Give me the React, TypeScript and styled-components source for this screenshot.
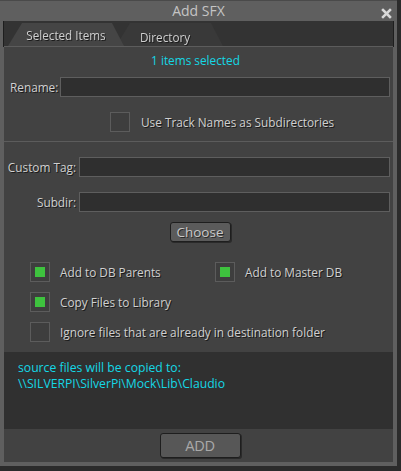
import React from "react";
import styled, { createGlobalStyle } from "styled-components";

const Global = createGlobalStyle`
  html, body { margin: 0; padding: 0; background: #2b2b2b; }
  body { font-family: "Open Sans", "Noto Sans", sans-serif; }
`;

const Window = styled.div`
  width: 397px;
  height: 466px;
  box-sizing: border-box;
  background: #5f5f5f;
  border-top: 1px solid #4a4a4a;
  padding: 0 4px 4px 4px;
  display: flex;
  flex-direction: column;
`;

const TitleBar = styled.div`
  height: 20px;
  position: relative;
  display: flex;
  align-items: center;
  justify-content: center;
  color: #c4c4c4;
  font-size: 14px;
  line-height: 20px;
`;

const Close = styled.svg`
  position: absolute;
  right: 1px;
  top: 7px;
`;

const Body = styled.div`
  flex: 1;
  display: flex;
  flex-direction: column;
  background: #424242;
`;

const TabBar = styled.div`
  height: 25px;
  background: #333333;
  border-bottom: 1px solid #5c5c5c;
  display: flex;
  align-items: flex-end;
  padding-left: 4px;
  filter: drop-shadow(1px 0 0 #1e1e1e) drop-shadow(-1px 0 0 #1e1e1e);
`;

const Tab = styled.div<{ $active?: boolean; $w: number }>`
  width: ${(p) => p.$w}px;
  height: 23px;
  margin-left: ${(p) => (p.$active ? 0 : -8)}px;
  position: relative;
  z-index: ${(p) => (p.$active ? 2 : 1)};
  background: ${(p) => (p.$active ? "#454545" : "#393939")};
  clip-path: polygon(14px 0, calc(100% - 12px) 0, 100% 100%, 0 100%);
  display: flex;
  align-items: center;
  justify-content: center;
  padding-top: ${(p) => (p.$active ? 0 : 4)}px;
  padding-right: ${(p) => (p.$active ? 0 : 9)}px;
  box-sizing: border-box;
  color: #cfcfcf;
  font-size: 11.7px;
  text-shadow: 1px 1px 0 #1c1c1c;
`;

const Status = styled.div`
  margin-top: 6px;
  height: 15px;
  line-height: 15px;
  text-align: center;
  color: #14d8e6;
  font-size: 11.8px;
  padding-right: 6px;
`;

const Label = styled.span`
  color: #d0d0d0;
  font-size: 11.8px;
  text-shadow: 1px 1px 0 #1a1a1a;
  white-space: nowrap;
`;

const FieldRow = styled.div<{ $labelW: number; $top: number; $align?: string }>`
  display: grid;
  grid-template-columns: ${(p) => p.$labelW}px 1fr;
  column-gap: 3px;
  align-items: center;
  margin-top: ${(p) => p.$top}px;
  padding-right: 3px;
  padding-left: ${(p) => (p.$align === "left" ? 6 : 0)}px;
  & > ${Label} {
    text-align: ${(p) => p.$align || "right"};
  }
`;

const Input = styled.div`
  height: 20px;
  box-sizing: border-box;
  background: #2f2f2f;
  border: 1px solid #5e5e5e;
`;

const CheckRow = styled.div<{ $top: number; $left: number }>`
  display: flex;
  align-items: center;
  gap: 11px;
  margin-top: ${(p) => p.$top}px;
  padding-left: ${(p) => p.$left}px;
`;

const Box = styled.div<{ $on?: boolean }>`
  width: 20px;
  height: 20px;
  box-sizing: border-box;
  border: 1px solid #5c5c5c;
  background: #3e3e3e;
  display: flex;
  align-items: center;
  justify-content: center;
  flex: none;
  &::after {
    content: "";
    width: 10px;
    height: 10px;
    background: ${(p) => (p.$on ? "#3ec23e" : "transparent")};
  }
`;

const Separator = styled.div`
  height: 1px;
  background: #5c5c5c;
  margin-top: 9px;
`;

const ButtonRow = styled.div<{ $top: number }>`
  display: flex;
  justify-content: center;
  margin-top: ${(p) => p.$top}px;
  padding-left: 3px;
`;

const Button = styled.div<{ $w: number; $h: number; $big?: boolean }>`
  width: ${(p) => p.$w}px;
  height: ${(p) => p.$h}px;
  box-sizing: border-box;
  border: 1px solid #1e1e1e;
  border-radius: 3px;
  background: ${(p) => (p.$big ? "#575757" : "#5b5b5b")};
  box-shadow: 1px 1px 0 #2a2a2a;
  color: ${(p) => (p.$big ? "#a8a8a8" : "#c9c9c9")};
  font-family: ${(p) => (p.$big ? '"Liberation Sans", Arial, sans-serif' : "inherit")};
  font-size: ${(p) => (p.$big ? 14 : 13.5)}px;
  display: flex;
  align-items: center;
  justify-content: center;
  text-shadow: ${(p) => (p.$big ? "none" : "1px 1px 0 #2a2a2a")};
`;

const CheckGrid = styled.div`
  display: grid;
  grid-template-columns: 185px 1fr;
  row-gap: 10px;
  margin-top: 20px;
  padding-left: 26px;
`;

const CheckItem = styled.div<{ $span?: boolean }>`
  display: flex;
  align-items: center;
  gap: 10px;
  grid-column: ${(p) => (p.$span ? "1 / 3" : "auto")};
`;

const Info = styled.div`
  margin-top: 10px;
  height: 77px;
  box-sizing: border-box;
  background: #303030;
  padding: 8px 0 0 14px;
  color: #14d8e6;
  font-size: 12.2px;
  line-height: 16px;
`;

const Footer = styled.div`
  flex: 1;
  display: flex;
  align-items: center;
  justify-content: center;
  padding-left: 3px;
`;

export default function App() {
  return (
    <>
      <Global />
      <Window>
        <TitleBar>
          Add SFX
          <Close width="11" height="11" viewBox="0 0 11 11">
            <path d="M2 2 L9 9 M9 2 L2 9" stroke="#d8d8d8" strokeWidth="2.5" strokeLinecap="square" />
          </Close>
        </TitleBar>
        <Body>
          <TabBar>
            <Tab $active $w={116}>Selected Items</Tab>
            <Tab $w={107}>Directory</Tab>
          </TabBar>
          <Status>1 items selected</Status>
          <FieldRow $labelW={47} $top={9} $align="left">
            <Label>Rename:</Label>
            <Input />
          </FieldRow>
          <CheckRow $top={15} $left={106}>
            <Box />
            <Label>Use Track Names as Subdirectories</Label>
          </CheckRow>
          <Separator />
          <FieldRow $labelW={72} $top={15}>
            <Label>Custom Tag:</Label>
            <Input />
          </FieldRow>
          <FieldRow $labelW={72} $top={15}>
            <Label>Subdir:</Label>
            <Input />
          </FieldRow>
          <ButtonRow $top={10}>
            <Button $w={61} $h={20}>Choose</Button>
          </ButtonRow>
          <CheckGrid>
            <CheckItem>
              <Box $on />
              <Label>Add to DB Parents</Label>
            </CheckItem>
            <CheckItem>
              <Box $on />
              <Label>Add to Master DB</Label>
            </CheckItem>
            <CheckItem $span>
              <Box $on />
              <Label>Copy Files to Library</Label>
            </CheckItem>
            <CheckItem $span>
              <Box />
              <Label>Ignore files that are already in destination folder</Label>
            </CheckItem>
          </CheckGrid>
          <Info>
            <div>source files will be copied to:</div>
            <div>\\SILVERPI\SilverPi\Mock\Lib\Claudio</div>
          </Info>
          <Footer>
            <Button $w={81} $h={25} $big>ADD</Button>
          </Footer>
        </Body>
      </Window>
    </>
  );
}
